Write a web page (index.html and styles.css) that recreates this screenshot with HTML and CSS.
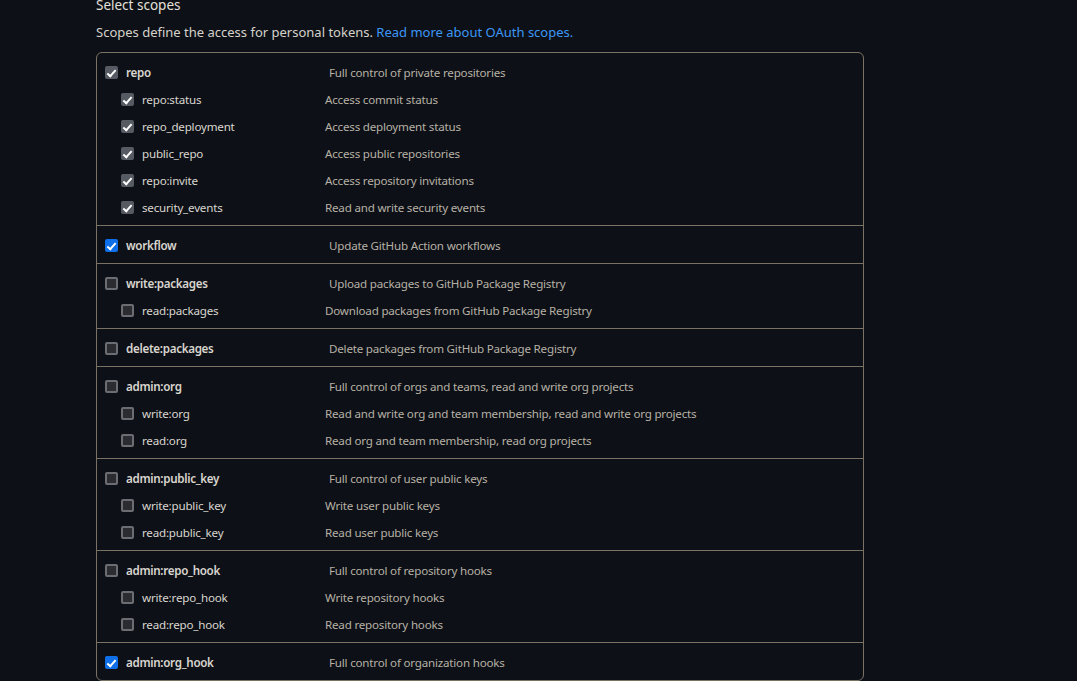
FILE: index.html
```html
<!DOCTYPE html>
<html>
<head>
<meta charset="utf-8">
<link rel="stylesheet" href="styles.css">
</head>
<body>
<div class="page">
  <h3 class="title">Select scopes</h3>
  <p class="lead">Scopes define the access for personal tokens. <a href="#">Read more about OAuth scopes.</a></p>
  <div class="scopes">
    <div class="group">
      <div class="row main"><span class="cb gray"></span><span class="name">repo</span><span class="desc">Full control of private repositories</span></div>
      <div class="row sub"><span class="cb gray"></span><span class="name">repo:status</span><span class="desc">Access commit status</span></div>
      <div class="row sub"><span class="cb gray"></span><span class="name">repo_deployment</span><span class="desc">Access deployment status</span></div>
      <div class="row sub"><span class="cb gray"></span><span class="name">public_repo</span><span class="desc">Access public repositories</span></div>
      <div class="row sub"><span class="cb gray"></span><span class="name">repo:invite</span><span class="desc">Access repository invitations</span></div>
      <div class="row sub"><span class="cb gray"></span><span class="name">security_events</span><span class="desc">Read and write security events</span></div>
    </div>
    <div class="group">
      <div class="row main"><span class="cb blue"></span><span class="name">workflow</span><span class="desc">Update GitHub Action workflows</span></div>
    </div>
    <div class="group">
      <div class="row main"><span class="cb"></span><span class="name">write:packages</span><span class="desc">Upload packages to GitHub Package Registry</span></div>
      <div class="row sub"><span class="cb"></span><span class="name">read:packages</span><span class="desc">Download packages from GitHub Package Registry</span></div>
    </div>
    <div class="group">
      <div class="row main"><span class="cb"></span><span class="name">delete:packages</span><span class="desc">Delete packages from GitHub Package Registry</span></div>
    </div>
    <div class="group">
      <div class="row main"><span class="cb"></span><span class="name">admin:org</span><span class="desc">Full control of orgs and teams, read and write org projects</span></div>
      <div class="row sub"><span class="cb"></span><span class="name">write:org</span><span class="desc">Read and write org and team membership, read and write org projects</span></div>
      <div class="row sub"><span class="cb"></span><span class="name">read:org</span><span class="desc">Read org and team membership, read org projects</span></div>
    </div>
    <div class="group">
      <div class="row main"><span class="cb"></span><span class="name">admin:public_key</span><span class="desc">Full control of user public keys</span></div>
      <div class="row sub"><span class="cb"></span><span class="name">write:public_key</span><span class="desc">Write user public keys</span></div>
      <div class="row sub"><span class="cb"></span><span class="name">read:public_key</span><span class="desc">Read user public keys</span></div>
    </div>
    <div class="group">
      <div class="row main"><span class="cb"></span><span class="name">admin:repo_hook</span><span class="desc">Full control of repository hooks</span></div>
      <div class="row sub"><span class="cb"></span><span class="name">write:repo_hook</span><span class="desc">Write repository hooks</span></div>
      <div class="row sub"><span class="cb"></span><span class="name">read:repo_hook</span><span class="desc">Read repository hooks</span></div>
    </div>
    <div class="group">
      <div class="row main"><span class="cb blue"></span><span class="name">admin:org_hook</span><span class="desc">Full control of organization hooks</span></div>
    </div>
  </div>
</div>
</body>
</html>
```
FILE: styles.css
```css
html, body {
  margin: 0;
  background: #0d1117;
}
body {
  font-family: "Noto Sans", "Open Sans", sans-serif;
  font-size: 12px;
  color: #d6d1ca;
  overflow: hidden;
  height: 681px;
}
.page {
  padding-left: 96px;
  margin-top: -5px;
}
.title {
  margin: 0;
  font-size: 13.5px;
  font-weight: 400;
  line-height: 20px;
  color: #e4e0da;
}
.lead {
  margin: 7px 0 0;
  font-size: 13px;
  line-height: 20px;
  color: #d6d1ca;
}
.lead a {
  color: #3d96f5;
  text-decoration: none;
}
.scopes {
  margin-top: 10px;
  width: 766px;
  border: 1px solid #7a7263;
  border-radius: 6px;
}
.group {
  padding: 9px 0 7px 8px;
  display: flex;
  flex-direction: column;
  gap: 6px;
}
.group + .group {
  border-top: 1px solid #7a7263;
}
.row {
  display: flex;
  align-items: center;
  height: 21px;
  font-size: 11.6px;
  letter-spacing: -0.2px;
}
.row .name {
  margin-left: 8px;
  color: #d9d5cf;
}
.row.main .name {
  width: 203px;
  font-weight: 600;
  letter-spacing: -0.3px;
}
.row.sub {
  padding-left: 16px;
}
.row.sub .name {
  width: 183px;
}
.desc {
  color: #b7b0a5;
}
.cb {
  box-sizing: border-box;
  width: 13px;
  height: 13px;
  flex: none;
  border-radius: 2px;
  border: 2px solid #6b6d73;
  background: #2a2c31;
  position: relative;
}
.cb.gray, .cb.blue {
  border: none;
  background: #565b63;
}
.cb.blue {
  background: #0f6fe9;
}
.cb.gray::after, .cb.blue::after {
  content: "";
  position: absolute;
  left: 4px;
  top: 1.5px;
  width: 3px;
  height: 7px;
  border-right: 2px solid #fff;
  border-bottom: 2px solid #fff;
  transform: rotate(42deg);
}
```
